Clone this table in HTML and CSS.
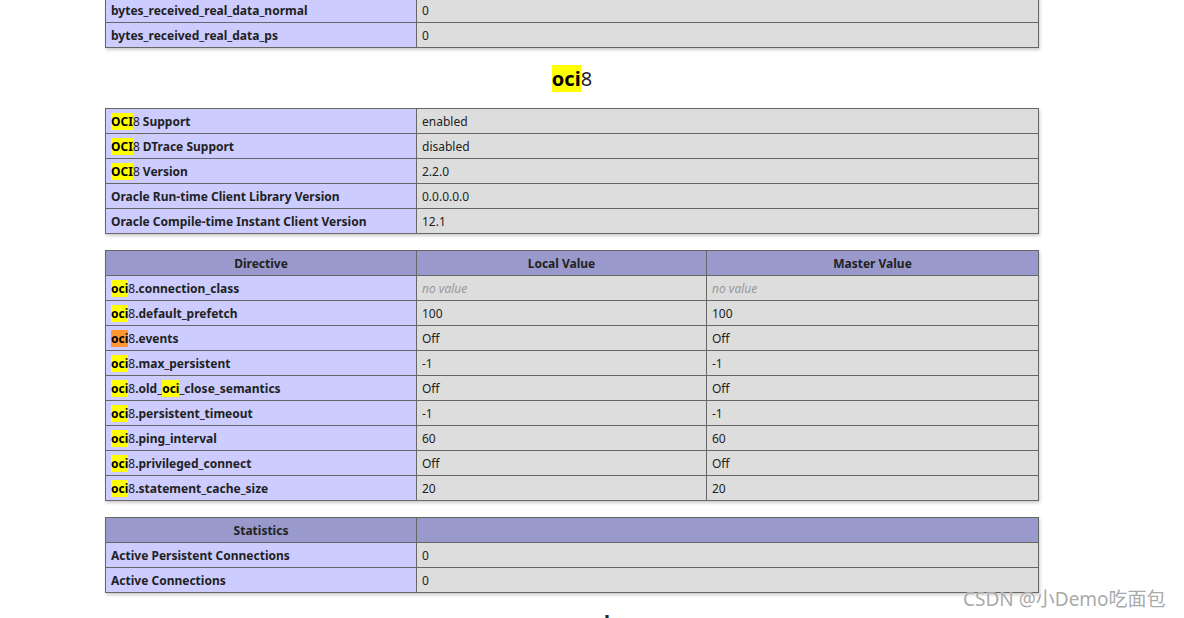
FILE: index.html
```html
<!DOCTYPE html>
<html>
<head>
<meta charset="utf-8">
<link rel="stylesheet" href="styles.css">
</head>
<body>
<div class="center">
  <table class="first">
    <tr><td class="e">bytes_received_real_data_normal</td><td class="v">0</td></tr>
    <tr><td class="e">bytes_received_real_data_ps</td><td class="v">0</td></tr>
  </table>
  <h2><mark>oci</mark><span class="rest">8</span></h2>
  <table>
    <tr><td class="e"><mark>OCI</mark><span class="rest">8</span> Support</td><td class="v">enabled</td></tr>
    <tr><td class="e"><mark>OCI</mark><span class="rest">8</span> DTrace Support</td><td class="v">disabled</td></tr>
    <tr><td class="e"><mark>OCI</mark><span class="rest">8</span> Version</td><td class="v">2.2.0</td></tr>
    <tr><td class="e">Oracle Run-time Client Library Version</td><td class="v">0.0.0.0.0</td></tr>
    <tr><td class="e">Oracle Compile-time Instant Client Version</td><td class="v">12.1</td></tr>
  </table>
  <table>
    <tr class="h"><th>Directive</th><th class="local">Local Value</th><th>Master Value</th></tr>
    <tr><td class="e"><mark>oci</mark><span class="rest">8</span>.connection_class</td><td class="v"><i>no value</i></td><td class="v"><i>no value</i></td></tr>
    <tr><td class="e"><mark>oci</mark><span class="rest">8</span>.default_prefetch</td><td class="v">100</td><td class="v">100</td></tr>
    <tr><td class="e"><mark class="active">oci</mark><span class="rest">8</span>.events</td><td class="v">Off</td><td class="v">Off</td></tr>
    <tr><td class="e"><mark>oci</mark><span class="rest">8</span>.max_persistent</td><td class="v">-1</td><td class="v">-1</td></tr>
    <tr><td class="e"><mark>oci</mark><span class="rest">8</span>.old_<mark>oci</mark>_close_semantics</td><td class="v">Off</td><td class="v">Off</td></tr>
    <tr><td class="e"><mark>oci</mark><span class="rest">8</span>.persistent_timeout</td><td class="v">-1</td><td class="v">-1</td></tr>
    <tr><td class="e"><mark>oci</mark><span class="rest">8</span>.ping_interval</td><td class="v">60</td><td class="v">60</td></tr>
    <tr><td class="e"><mark>oci</mark><span class="rest">8</span>.privileged_connect</td><td class="v">Off</td><td class="v">Off</td></tr>
    <tr><td class="e"><mark>oci</mark><span class="rest">8</span>.statement_cache_size</td><td class="v">20</td><td class="v">20</td></tr>
  </table>
  <table>
    <tr class="h"><th>Statistics</th><th></th></tr>
    <tr><td class="e">Active Persistent Connections</td><td class="v">0</td></tr>
    <tr><td class="e">Active Connections</td><td class="v">0</td></tr>
  </table>
  <h2 class="next">openssl</h2>
</div>
<div class="watermark">CSDN @小Demo吃面包</div>
</body>
</html>
```
FILE: styles.css
```css
html, body {
  margin: 0;
  padding: 0;
  background: #fff;
  overflow: hidden;
  height: 618px;
}
body {
  color: #222;
  font-family: "Noto Sans", "Open Sans", "Noto Sans CJK SC", sans-serif;
}
.center {
  width: 1144px;
  text-align: center;
}
table {
  border-collapse: collapse;
  border: 0;
  width: 934px;
  box-shadow: 1px 2px 3px #ccc;
  margin: 16px auto;
  text-align: left;
}
table.first {
  margin-top: -3px;
}
td, th {
  border: 1px solid #666;
  font-size: 12px;
  line-height: 16px;
  vertical-align: baseline;
  padding: 5px 5px 3px;
}
th {
  text-align: center;
}
h2 {
  font-size: 20px;
  line-height: 27px;
  margin: 17px 0 16px;
}
h2.next {
  margin-top: 13px;
}
.e {
  background-color: #ccf;
  width: 300px;
  font-weight: bold;
}
.h {
  background-color: #99c;
  font-weight: bold;
}
.local {
  width: 279px;
}
.v {
  background-color: #ddd;
}
.v i {
  color: #999;
}
mark {
  background: #ffff00;
  color: #000;
}
mark.active {
  background: #ff9632;
}
.rest {
  font-weight: 400;
}
.watermark {
  position: absolute;
  left: 963px;
  top: 586px;
  font-family: "Noto Sans", "Noto Sans CJK SC", sans-serif;
  font-size: 19px;
  line-height: 26px;
  color: #aaa;
  text-shadow: 0 0 1px #fff;
}
```
